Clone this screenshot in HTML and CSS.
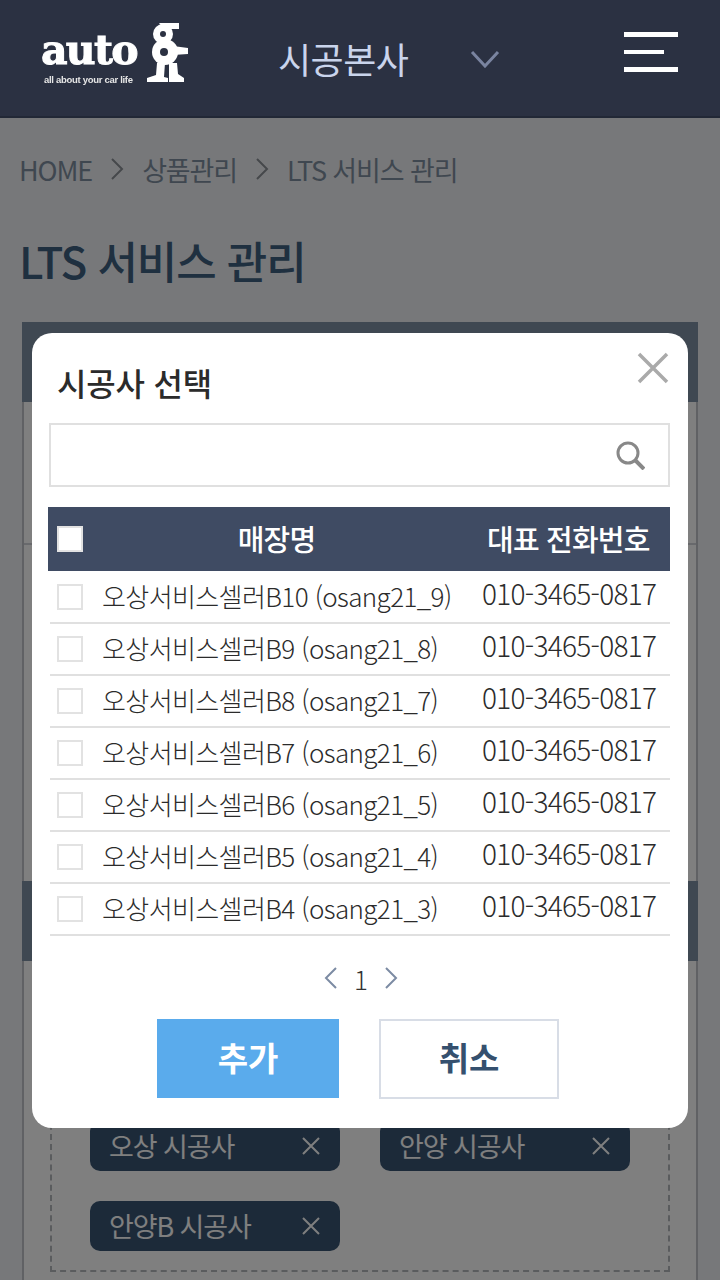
FILE: index.html
```html
<!DOCTYPE html>
<html lang="ko">
<head>
  <meta charset="UTF-8">
  <meta name="viewport" content="width=device-width, initial-scale=1.0">
  <title>LTS 서비스 관리</title>
  <link rel="stylesheet" href="styles.css">
</head>
<body>
  <header class="topbar">
    <div class="logo">
      <div class="logoWords">
        <span class="logoName">auto</span>
        <span class="logoTag">all about your car life</span>
      </div>
      <svg class="logoMark" width="41" height="61" viewBox="0 0 41 61">
        <path d="M12 2h20v6H24l-4 4z" fill="#fff"/>
        <circle cx="16" cy="13" r="10" fill="#fff"/>
        <circle cx="16" cy="13" r="3" fill="#2b3142"/>
        <circle cx="18" cy="31" r="13" fill="#fff"/>
        <circle cx="17" cy="31" r="4" fill="#2b3142"/>
        <path d="M26 25l15 2v6l-15 1z" fill="#fff"/>
        <path d="M10 42h8l-1 14 4 1v4H0v-4l9-3zM22 42h8l1 11 6 4v4H22z" fill="#fff"/>
      </svg>
    </div>
    <div class="shopName">시공본사</div>
    <svg class="shopArrow" width="30" height="18" viewBox="0 0 30 18"><path d="M2 2l13 14L28 2" fill="none" stroke="#7a84a0" stroke-width="3"/></svg>
    <div class="menuBtn"><i></i><i class="short"></i><i></i></div>
  </header>

  <main class="page">
    <div class="crumbs">
      <span>HOME</span>
      <svg width="14" height="22" viewBox="0 0 14 22"><path d="M2 1l10 10L2 21" fill="none" stroke="#8b9096" stroke-width="2"/></svg>
      <span>상품관리</span>
      <svg width="14" height="22" viewBox="0 0 14 22"><path d="M2 1l10 10L2 21" fill="none" stroke="#8b9096" stroke-width="2"/></svg>
      <span>LTS 서비스 관리</span>
    </div>
    <h1 class="pageTitle">LTS 서비스 관리</h1>
    <section class="panel">
      <div class="band"></div>
      <div class="bandBody"></div>
      <div class="bandBody2"></div>
      <div class="band"></div>
      <div class="dashBox">
        <div class="chip"><span>오상 시공사</span><svg width="18" height="18" viewBox="0 0 18 18"><path d="M1 1l16 16M17 1L1 17" stroke="#fff" stroke-width="2"/></svg></div>
        <div class="chip"><span>안양 시공사</span><svg width="18" height="18" viewBox="0 0 18 18"><path d="M1 1l16 16M17 1L1 17" stroke="#fff" stroke-width="2"/></svg></div>
        <div class="chip"><span>안양B 시공사</span><svg width="18" height="18" viewBox="0 0 18 18"><path d="M1 1l16 16M17 1L1 17" stroke="#fff" stroke-width="2"/></svg></div>
      </div>
    </section>
  </main>

  <div class="dim">
    <div class="modal">
      <svg class="closeBtn" width="32" height="32" viewBox="0 0 32 32"><path d="M2 2l28 28M30 2L2 30" stroke="#aaa" stroke-width="3.5"/></svg>
      <h2 class="modalTitle">시공사 선택</h2>
      <div class="searchBox">
        <svg width="29" height="29" viewBox="0 0 29 29"><circle cx="12" cy="12" r="10" fill="none" stroke="#888" stroke-width="3"/><path d="M18.500 18.500l9.500 9.500" stroke="#888" stroke-width="4"/></svg>
      </div>
      <div class="tableHead">
        <span class="check checkHead"></span>
        <span class="headName">매장명</span>
        <span class="headTel">대표 전화번호</span>
      </div>
      <div class="rows">
        <div class="row"><span class="check"></span><span class="rowName">오상서비스셀러B10 (osang21_9)</span><span class="rowTel">010-3465-0817</span></div>
        <div class="row"><span class="check"></span><span class="rowName">오상서비스셀러B9 (osang21_8)</span><span class="rowTel">010-3465-0817</span></div>
        <div class="row"><span class="check"></span><span class="rowName">오상서비스셀러B8 (osang21_7)</span><span class="rowTel">010-3465-0817</span></div>
        <div class="row"><span class="check"></span><span class="rowName">오상서비스셀러B7 (osang21_6)</span><span class="rowTel">010-3465-0817</span></div>
        <div class="row"><span class="check"></span><span class="rowName">오상서비스셀러B6 (osang21_5)</span><span class="rowTel">010-3465-0817</span></div>
        <div class="row"><span class="check"></span><span class="rowName">오상서비스셀러B5 (osang21_4)</span><span class="rowTel">010-3465-0817</span></div>
        <div class="row"><span class="check"></span><span class="rowName">오상서비스셀러B4 (osang21_3)</span><span class="rowTel">010-3465-0817</span></div>
      </div>
      <div class="pager">
        <svg width="14" height="22" viewBox="0 0 14 22"><path d="M12 1L2 11l10 10" fill="none" stroke="#7c8ba3" stroke-width="2"/></svg>
        <span>1</span>
        <svg width="14" height="22" viewBox="0 0 14 22"><path d="M2 1l10 10L2 21" fill="none" stroke="#7c8ba3" stroke-width="2"/></svg>
      </div>
      <div class="btns">
        <button class="btn btnAdd">추가</button>
        <button class="btn btnCancel">취소</button>
      </div>
    </div>
  </div>
</body>
</html>
```

FILE: styles.css
```css
* {
  box-sizing: border-box;
}

body {
  margin: 0;
  width: 720px;
  height: 1280px;
  overflow: hidden;
  position: relative;
  background: #eff1f5;
  font-family: "Noto Sans CJK KR", "Noto Sans", sans-serif;
  font-weight: 300;
}

/* header sits above the dim layer */
.topbar {
  position: relative;
  z-index: 2;
  height: 118px;
  display: flex;
  align-items: center;
  background: #2b3142;
  border-bottom: 2px solid #222836;
}

.logo {
  width: 238px;
  padding-left: 41px;
  margin-top: -10px;
  display: flex;
  align-items: flex-start;
  gap: 4px;
  filter: blur(0.5px);
}

.logoWords {
  width: 102px;
  display: flex;
  flex-direction: column;
  padding-top: 5px;
}

.logoName {
  font-family: "DejaVu Serif", serif;
  font-weight: 700;
  font-size: 41px;
  line-height: 48px;
  letter-spacing: -1.7px;
  -webkit-text-stroke: 1px #fff;
  color: #fff;
  white-space: nowrap;
}

.logoTag {
  font-family: "Liberation Sans", sans-serif;
  font-weight: 700;
  font-size: 9.5px;
  line-height: 12px;
  letter-spacing: -0.3px;
  color: #e6e6e6;
  padding-left: 3px;
  white-space: nowrap;
}

.shopName {
  margin-left: 40px;
  font-size: 36px;
  font-weight: 400;
  letter-spacing: -0.5px;
  color: #c9d4ec;
}

.shopArrow {
  margin-left: 62px;
  margin-top: 2px;
}

.menuBtn {
  margin-left: auto;
  margin-right: 42px;
  margin-top: -13px;
  width: 54px;
  display: flex;
  flex-direction: column;
  gap: 13px;
}

.menuBtn i {
  display: block;
  height: 5px;
  background: #fff;
}

.menuBtn i.short {
  width: 40px;
  height: 4px;
}

.page {
  padding: 31px 22px 0;
}

.crumbs {
  height: 40px;
  display: flex;
  align-items: center;
  gap: 18px;
  margin-left: -3px;
  font-size: 27px;
  font-weight: 400;
  letter-spacing: -1.1px;
  color: #7f8fa0;
}

.pageTitle {
  margin: 41px 0 0 -3px;
  height: 92px;
  font-size: 44px;
  line-height: 60px;
  font-weight: 500;
  letter-spacing: -1.1px;
  color: #3e6080;
}

.panel {
  width: 676px;
  height: 1000px;
  border: 2px solid #c0c3c8;
  border-top: 0;
  background: #fff;
}

.band {
  height: 80px;
  margin: 0 -2px;
  background: #7e90a4;
}

.bandBody {
  height: 143px;
  border-bottom: 2px solid #d0d3d9;
}

.bandBody2 {
  height: 336px;
}

.dashBox {
  margin: 112px 26px 0;
  padding: 46px 38px 0;
  width: 620px;
  height: 199px;
  border: 2px dashed #b5b8bd;
  display: flex;
  flex-wrap: wrap;
  gap: 30px 40px;
  align-content: flex-start;
}

.chip {
  width: 250px;
  height: 50px;
  padding: 0 20px 0 19px;
  border-radius: 10px;
  background: #385472;
  color: #fff;
  display: flex;
  align-items: center;
  justify-content: space-between;
  font-size: 27px;
  font-weight: 400;
  letter-spacing: -1.1px;
}

.chip span {
  margin-top: -2px;
}

.dim {
  position: absolute;
  left: 0;
  top: 0;
  z-index: 1;
  width: 720px;
  height: 1280px;
  background: rgba(0, 0, 0, 0.5);
  padding: 333px 32px 0;
}

.modal {
  position: relative;
  width: 656px;
  height: 795px;
  padding: 26px 18px 0 16px;
  border-radius: 20px;
  background: #fff;
}

.closeBtn {
  position: absolute;
  right: 19px;
  top: 19px;
}

.modalTitle {
  margin: 0 0 0 9px;
  height: 64px;
  font-size: 32px;
  line-height: 46px;
  font-weight: 500;
  letter-spacing: -0.2px;
  color: #2b2b2b;
}

.searchBox {
  height: 64px;
  margin-left: 1px;
  padding-right: 23px;
  border: 2px solid #e0e0e0;
  display: flex;
  align-items: center;
  justify-content: flex-end;
}

.tableHead {
  height: 64px;
  margin-top: 20px;
  padding: 0 0 3px 9px;
  background: #3f4b63;
  display: flex;
  align-items: center;
  color: #fff;
  font-size: 29px;
  font-weight: 500;
  letter-spacing: -0.8px;
}

.check {
  flex: none;
  width: 26px;
  height: 26px;
  border: 2px solid #e2e2e2;
  background: #fff;
}

.tableHead .check {
  margin-top: 3px;
}

.headName {
  width: 387px;
  text-align: center;
}

.headTel {
  white-space: nowrap;
  margin-left: 17px;
}

.rows {
  padding-top: 1px;
}

.row {
  height: 52px;
  margin-left: 2px;
  padding-left: 7px;
  border-bottom: 2px solid #e0e0e0;
  display: flex;
  align-items: center;
  font-size: 26px;
  letter-spacing: -0.6px;
  color: #2b2b2b;
}

.rowName {
  width: 380px;
  margin-left: 19px;
  margin-top: -3px;
  white-space: nowrap;
}

.rowTel {
  white-space: nowrap;
  margin-top: -8px;
  font-size: 28px;
  letter-spacing: -0.7px;
}

.pager {
  margin-top: 25px;
  margin-left: 4px;
  height: 34px;
  display: flex;
  align-items: center;
  justify-content: center;
  gap: 16px;
  font-size: 26px;
  color: #333;
}

.btns {
  margin-top: 24px;
  margin-left: -2px;
  display: flex;
  justify-content: center;
  gap: 40px;
}

.btn {
  height: 80px;
  padding: 0 0 4px;
  font-family: inherit;
  font-size: 33px;
  font-weight: 700;
  border-radius: 0;
}

.btnAdd {
  width: 182px;
  height: 79px;
  border: 0;
  background: #5aabec;
  color: #fff;
}

.btnCancel {
  width: 180px;
  border: 2px solid #d8dde6;
  background: #fff;
  color: #35506e;
}
```
